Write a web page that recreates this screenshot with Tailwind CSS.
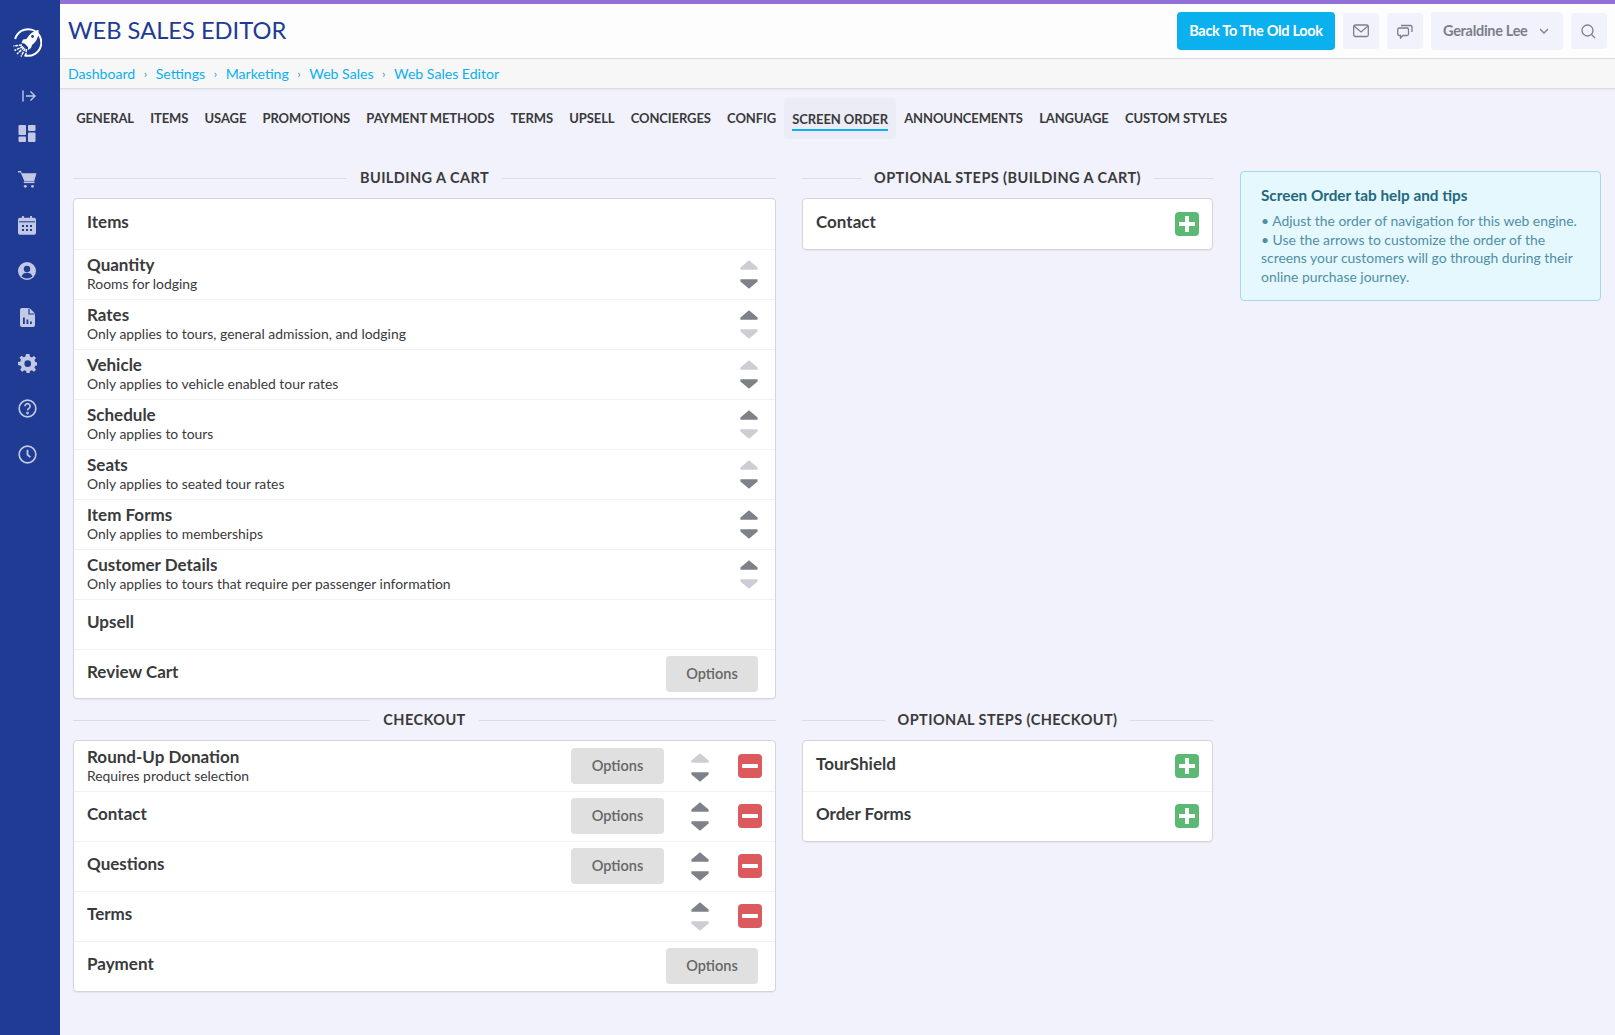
<!DOCTYPE html>
<html><head><meta charset="utf-8"><script src="https://cdn.jsdelivr.net/npm/@tailwindcss/browser@4"></script></head>
<body class="m-0">
<svg width="0" height="0" class="absolute"><defs>
<symbol id="up" viewBox="0 0 18 10"><path d="M9 0.2 L17.6 7.4 V9.8 H0.4 V7.4 Z" fill="currentColor"/></symbol>
<symbol id="down" viewBox="0 0 18 10"><path d="M9 9.8 L17.6 2.6 V0.2 H0.4 V2.6 Z" fill="currentColor"/></symbol>
</defs></svg>
<div class="flex w-[1615px] h-[1035px] overflow-hidden bg-[#f1f2fb] font-['Lato','Liberation_Sans',sans-serif] text-[#3a3a3c]">
  <aside class="w-[60px] shrink-0 bg-[#1f3b94] flex flex-col items-center pr-[6px] text-[#c3c9e4]">
    <svg class="mt-[28px]" width="30" height="30" viewBox="0 0 30 30" fill="none">
      <circle cx="16" cy="14.500" r="13.300" stroke="#fff" stroke-width="2" stroke-dasharray="62.400 21.200" transform="rotate(195 16 14.500)"/>
      <path d="M26.500 2 C22 2.500 17.500 6 14.500 11 L11 11.500 L9.500 15 L12.500 15.500 L16 19 L16 22 L19 20 L20 17 C25 13.500 27 7.500 26.500 2 Z" fill="#fff"/>
      <circle cx="20.500" cy="8.500" r="1.400" fill="#1f3b94"/>
      <path d="M10 17 L1.500 18 M11 18.500 L2.500 22.500 M12 19.500 L5 26 M13 20.500 L9 28.500 M14.500 21 L13.500 29" stroke="#fff" stroke-width="1.500" stroke-dasharray="3 0.800"/>
    </svg>
    <svg class="mt-[31px] ml-[4px]" width="14" height="14" viewBox="0 0 14 14" fill="none" stroke="currentColor" stroke-width="1.400"><path d="M1 1.500v11M4 7h9M8.500 2.500L13 7l-4.500 4.500"/></svg>
    <svg class="mt-[22px]" width="18" height="17" viewBox="0 0 18 17" fill="currentColor"><rect x="0.500" y="0" width="7.500" height="10" rx="1"/><rect x="10" y="0" width="7.500" height="6" rx="1"/><rect x="0.500" y="11.500" width="7.500" height="5.500" rx="1"/><rect x="10" y="7.500" width="7.500" height="9.500" rx="1"/></svg>
    <svg class="mt-[29px]" width="19" height="17" viewBox="0 0 19 17" fill="currentColor"><path d="M0 0h3l.9 2.300H18.500l-2.300 7.700H6.300L2.600 1.500H0z"/><path d="M5.800 10.500h10.700v1.600H5.800z"/><circle cx="7.300" cy="15.300" r="1.400"/><circle cx="14.500" cy="15.300" r="1.400"/></svg>
    <svg class="mt-[28px]" width="18" height="19" viewBox="0 0 18 19" fill="currentColor"><rect x="0" y="1.800" width="18" height="17" rx="2"/><rect x="4" y="0" width="1.800" height="3"/><rect x="12.200" y="0" width="1.800" height="3"/><rect x="1" y="5.300" width="16" height="1" fill="#1f3b94"/><g fill="#1f3b94"><rect x="4" y="9" width="2" height="2"/><rect x="8" y="9" width="2" height="2"/><rect x="12" y="9" width="2" height="2"/><rect x="4" y="13" width="2" height="2"/><rect x="8" y="13" width="2" height="2"/><rect x="12" y="13" width="2" height="2"/></g></svg>
    <svg class="mt-[27px]" width="18" height="18" viewBox="0 0 18 18"><circle cx="9" cy="9" r="9" fill="currentColor"/><circle cx="9" cy="7" r="3.200" fill="#1f3b94"/><path d="M3.500 14.500c1-3 3-3.800 5.500-3.800s4.500.8 5.500 3.800c-3 2.500-8 2.500-11 0z" fill="#1f3b94"/></svg>
    <svg class="mt-[28px]" width="15" height="19" viewBox="0 0 15 19"><path d="M2 0h7.500L15 5.500V17a2 2 0 0 1-2 2H2a2 2 0 0 1-2-2V2a2 2 0 0 1 2-2z" fill="currentColor"/><path d="M9 0.500V6h5.500" fill="none" stroke="#1f3b94" stroke-width="1.200"/><rect x="3" y="9.500" width="1.800" height="6.500" fill="#1f3b94"/><rect x="6.500" y="11.500" width="1.800" height="4.500" fill="#1f3b94"/><rect x="10" y="13.500" width="1.800" height="2.500" fill="#1f3b94"/></svg>
    <svg class="mt-[27px]" width="19" height="19" viewBox="0 0 24 24" fill="currentColor"><path fill-rule="evenodd" d="M14.500 0l.6 3.300 2.300 1 2.800-1.900 2.500 2.500-1.900 2.800 1 2.300 3.300.6v3.600l-3.300.6-1 2.300 1.900 2.800-2.500 2.500-2.800-1.900-2.300 1-.6 3.300h-3.600l-.6-3.300-2.300-1-2.800 1.900-2.500-2.500 1.900-2.800-1-2.300L-.5 13.900v-3.600l3.300-.6 1-2.300-1.900-2.800 2.500-2.500 2.800 1.900 2.300-1L10.100 0zM12.300 8a4.200 4.200 0 1 0 0 8.400 4.200 4.200 0 0 0 0-8.400z"/></svg>
    <svg class="mt-[26px]" width="19" height="19" viewBox="0 0 20 20" fill="none" stroke="currentColor" stroke-width="1.700"><circle cx="10" cy="10" r="8.800"/><path d="M7.300 7.600a2.700 2.700 0 1 1 4.200 2.300c-1 .7-1.500 1.100-1.500 2.300"/><circle cx="10" cy="14.800" r=".6" fill="currentColor"/></svg>
    <svg class="mt-[27px]" width="19" height="19" viewBox="0 0 20 20" fill="none" stroke="currentColor" stroke-width="1.700"><circle cx="10" cy="10" r="8.800"/><path d="M10 5v5.300l3 2.500" stroke-width="1.900"/></svg>
  </aside>
  <main class="flex-1 min-w-0 flex flex-col">
    <div class="h-1 bg-[#9370d8]"></div>
    <header class="h-[54px] bg-[#fdfdfd] border-b border-[#dcdcdc] box-content flex items-center pl-[8px] pr-[8px]">
      <h1 class="text-[23.700px] leading-none text-[#1f3b94] font-normal flex-1">WEB SALES EDITOR</h1>
      <a class="h-[38px] w-[158px] rounded bg-[#0bb0ef] text-white font-bold text-[14.500px] tracking-[-0.3px] flex items-center justify-center">Back To The Old Look</a>
      <div class="ml-2 w-9 h-9 rounded bg-[#f1f2fb] flex items-center justify-center text-[#7c7f8a]"><svg width="16" height="14" viewBox="0 0 16 14" fill="none" stroke="currentColor" stroke-width="1.300"><rect x=".7" y="1" width="14.600" height="11.500" rx="1.500"/><path d="M1 2l7 6 7-6"/></svg></div>
      <div class="ml-2 w-9 h-9 rounded bg-[#f1f2fb] flex items-center justify-center text-[#7c7f8a]"><svg width="16" height="15" viewBox="0 0 16 15" fill="none" stroke="currentColor" stroke-width="1.300"><path d="M2 4h8a1.500 1.500 0 0 1 1.500 1.500V10A1.500 1.500 0 0 1 10 11.500H6L3.500 14v-2.500H2A1.500 1.500 0 0 1 .7 10V5.500A1.500 1.500 0 0 1 2 4z"/><path d="M4 1.500h9.500A1.500 1.500 0 0 1 15 3v5"/></svg></div>
      <div class="ml-2 w-[132px] h-[38px] rounded bg-[#f1f2fb] flex items-center pl-3 text-[#7c7f8a] font-bold text-[14.500px] tracking-[-0.3px]">Geraldine Lee<svg class="ml-[11px]" width="10" height="6" viewBox="0 0 10 6" fill="none" stroke="currentColor" stroke-width="1.300"><path d="M1 1l4 4 4-4"/></svg></div>
      <div class="ml-2 w-9 h-9 rounded bg-[#f1f2fb] flex items-center justify-center text-[#7c7f8a]"><svg class="-ml-[2px]" width="15" height="15" viewBox="0 0 15 15" fill="none" stroke="currentColor" stroke-width="1.300"><circle cx="6.500" cy="6.500" r="5.500"/><path d="M10.500 10.500L14 14"/></svg></div>
    </header>
    <nav class="h-[29px] bg-[#f7f7f7] border-b border-[#dcdcdc] box-content shadow-[0_1px_2px_rgba(0,0,0,0.05)] flex items-center pl-[8px] text-[14.100px] text-[#0bb0ef]">
      <a>Dashboard</a><span class="mx-[8.600px] text-[#2f9ccc] text-[12px]">›</span><a>Settings</a><span class="mx-[8.600px] text-[#2f9ccc] text-[12px]">›</span><a>Marketing</a><span class="mx-[8.600px] text-[#2f9ccc] text-[12px]">›</span><a>Web Sales</a><span class="mx-[8.600px] text-[#2f9ccc] text-[12px]">›</span><a>Web Sales Editor</a>
    </nav>
    <div class="mt-[9px] pl-[8px] h-[41px] flex text-[13px] font-bold tracking-[-0.1px] text-[#3a3a3c]">
      <a class="px-[8.130px] flex items-center">GENERAL</a><a class="px-[8.130px] flex items-center">ITEMS</a><a class="px-[8.130px] flex items-center">USAGE</a><a class="px-[8.130px] flex items-center">PROMOTIONS</a><a class="px-[8.130px] flex items-center">PAYMENT METHODS</a><a class="px-[8.130px] flex items-center">TERMS</a><a class="px-[8.130px] flex items-center">UPSELL</a><a class="px-[8.130px] flex items-center">CONCIERGES</a><a class="px-[8.130px] flex items-center">CONFIG</a>
      <a class="px-[8.130px] flex items-center bg-[#ebecf5] rounded-[4px]"><span class="pt-[2px] border-b-2 border-[#0bb0ef] leading-[20px]">SCREEN ORDER</span></a>
      <a class="px-[8.130px] flex items-center">ANNOUNCEMENTS</a><a class="px-[8.130px] flex items-center">LANGUAGE</a><a class="px-[8.130px] flex items-center">CUSTOM STYLES</a>
    </div>
    <div class="mt-[25px] pl-[13px] flex items-start">
      <div class="w-[703px] shrink-0">
        <div class="flex items-center gap-[13px] h-[28px] text-[14.500px] font-bold tracking-[0.420px] mb-[-8px]"><i class="flex-1 h-px bg-[#dcdde3]"></i><span>BUILDING A CART</span><i class="flex-1 h-px bg-[#dcdde3]"></i></div>
        <section class="mt-[14px] h-[501px] box-border overflow-hidden bg-white border border-[#d3d4de] rounded-[4px] shadow-[0_1px_1px_rgba(0,0,0,0.05)] flex flex-col divide-y divide-[#f1f1f3]">
          <div class="h-[51px] shrink-0 px-[13px] pt-[12px] text-[17px] leading-[22px] font-bold">Items</div>
          <div class="h-[50px] shrink-0 flex items-center justify-between pl-[13px] pr-[17px]"><div class="-mt-[2px]"><div class="text-[17px] leading-[20px] font-bold">Quantity</div><div class="text-[13.900px] leading-[18px]">Rooms for lodging</div></div><div class="flex flex-col gap-[9px] text-[#ccced3]"><svg width="18" height="10"><use href="#up"/></svg><svg class="text-[#7d8288]" width="18" height="10"><use href="#down"/></svg></div></div>
          <div class="h-[50px] shrink-0 flex items-center justify-between pl-[13px] pr-[17px]"><div class="-mt-[2px]"><div class="text-[17px] leading-[20px] font-bold">Rates</div><div class="text-[13.900px] leading-[18px]">Only applies to tours, general admission, and lodging</div></div><div class="flex flex-col gap-[9px] text-[#7d8288]"><svg width="18" height="10"><use href="#up"/></svg><svg class="text-[#ccced3]" width="18" height="10"><use href="#down"/></svg></div></div>
          <div class="h-[50px] shrink-0 flex items-center justify-between pl-[13px] pr-[17px]"><div class="-mt-[2px]"><div class="text-[17px] leading-[20px] font-bold">Vehicle</div><div class="text-[13.900px] leading-[18px]">Only applies to vehicle enabled tour rates</div></div><div class="flex flex-col gap-[9px] text-[#ccced3]"><svg width="18" height="10"><use href="#up"/></svg><svg class="text-[#7d8288]" width="18" height="10"><use href="#down"/></svg></div></div>
          <div class="h-[50px] shrink-0 flex items-center justify-between pl-[13px] pr-[17px]"><div class="-mt-[2px]"><div class="text-[17px] leading-[20px] font-bold">Schedule</div><div class="text-[13.900px] leading-[18px]">Only applies to tours</div></div><div class="flex flex-col gap-[9px] text-[#7d8288]"><svg width="18" height="10"><use href="#up"/></svg><svg class="text-[#ccced3]" width="18" height="10"><use href="#down"/></svg></div></div>
          <div class="h-[50px] shrink-0 flex items-center justify-between pl-[13px] pr-[17px]"><div class="-mt-[2px]"><div class="text-[17px] leading-[20px] font-bold">Seats</div><div class="text-[13.900px] leading-[18px]">Only applies to seated tour rates</div></div><div class="flex flex-col gap-[9px] text-[#ccced3]"><svg width="18" height="10"><use href="#up"/></svg><svg class="text-[#7d8288]" width="18" height="10"><use href="#down"/></svg></div></div>
          <div class="h-[50px] shrink-0 flex items-center justify-between pl-[13px] pr-[17px]"><div class="-mt-[2px]"><div class="text-[17px] leading-[20px] font-bold">Item Forms</div><div class="text-[13.900px] leading-[18px]">Only applies to memberships</div></div><div class="flex flex-col gap-[9px] text-[#7d8288]"><svg width="18" height="10"><use href="#up"/></svg><svg width="18" height="10"><use href="#down"/></svg></div></div>
          <div class="h-[50px] shrink-0 flex items-center justify-between pl-[13px] pr-[17px]"><div class="-mt-[2px]"><div class="text-[17px] leading-[20px] font-bold">Customer Details</div><div class="text-[13.900px] leading-[18px]">Only applies to tours that require per passenger information</div></div><div class="flex flex-col gap-[9px] text-[#7d8288]"><svg width="18" height="10"><use href="#up"/></svg><svg class="text-[#ccced3]" width="18" height="10"><use href="#down"/></svg></div></div>
          <div class="h-[50px] shrink-0 px-[13px] pt-[11px] text-[17px] leading-[22px] font-bold">Upsell</div>
          <div class="h-[48px] shrink-0 flex items-center justify-between pl-[13px] pr-[17px]"><div class="text-[17px] leading-[22px] font-bold -mt-[4px]">Review Cart</div><button class="w-[92px] h-9 rounded bg-[#e0e0e0] text-[14.500px] font-semibold text-[#666]">Options</button></div>
        </section>
        <div class="mt-[7px] flex items-center gap-[13px] h-[28px] text-[14.500px] font-bold tracking-[0.420px]"><i class="flex-1 h-px bg-[#dcdde3]"></i><span>CHECKOUT</span><i class="flex-1 h-px bg-[#dcdde3]"></i></div>
        <section class="mt-[6px] h-[252px] box-border overflow-hidden bg-white border border-[#d3d4de] rounded-[4px] shadow-[0_1px_1px_rgba(0,0,0,0.05)] flex flex-col divide-y divide-[#f1f1f3]">
          <div class="h-[51px] shrink-0 flex items-center px-[13px]"><div class="flex-1 -mt-[1px]"><div class="text-[17px] leading-[20px] font-bold">Round-Up Donation</div><div class="text-[13.900px] leading-[18px]">Requires product selection</div></div><button class="w-[93px] h-9 rounded bg-[#e0e0e0] text-[14.500px] font-semibold text-[#666]">Options</button><div class="ml-[27px] mt-[2px] flex flex-col gap-[9px] text-[#ccced3]"><svg width="18" height="10"><use href="#up"/></svg><svg class="text-[#7d8288]" width="18" height="10"><use href="#down"/></svg></div><div class="ml-[29px] w-6 h-6 rounded-[4px] bg-[#dc5a5e] flex items-center justify-center"><i class="w-4 h-1 bg-white rounded-[1px]"></i></div></div>
          <div class="h-[50px] shrink-0 flex items-center px-[13px] pb-[2px]"><div class="flex-1 text-[17px] leading-[22px] font-bold -mt-[3px]">Contact</div><button class="w-[93px] h-9 rounded bg-[#e0e0e0] text-[14.500px] font-semibold text-[#666]">Options</button><div class="ml-[27px] mt-[2px] flex flex-col gap-[9px] text-[#7d8288]"><svg width="18" height="10"><use href="#up"/></svg><svg width="18" height="10"><use href="#down"/></svg></div><div class="ml-[29px] w-6 h-6 rounded-[4px] bg-[#dc5a5e] flex items-center justify-center"><i class="w-4 h-1 bg-white rounded-[1px]"></i></div></div>
          <div class="h-[50px] shrink-0 flex items-center px-[13px] pb-[2px]"><div class="flex-1 text-[17px] leading-[22px] font-bold -mt-[3px]">Questions</div><button class="w-[93px] h-9 rounded bg-[#e0e0e0] text-[14.500px] font-semibold text-[#666]">Options</button><div class="ml-[27px] mt-[2px] flex flex-col gap-[9px] text-[#7d8288]"><svg width="18" height="10"><use href="#up"/></svg><svg width="18" height="10"><use href="#down"/></svg></div><div class="ml-[29px] w-6 h-6 rounded-[4px] bg-[#dc5a5e] flex items-center justify-center"><i class="w-4 h-1 bg-white rounded-[1px]"></i></div></div>
          <div class="h-[50px] shrink-0 flex items-center px-[13px] pb-[2px]"><div class="flex-1 text-[17px] leading-[22px] font-bold -mt-[3px]">Terms</div><div class="ml-[27px] mt-[2px] flex flex-col gap-[9px] text-[#7d8288]"><svg width="18" height="10"><use href="#up"/></svg><svg class="text-[#ccced3]" width="18" height="10"><use href="#down"/></svg></div><div class="ml-[29px] w-6 h-6 rounded-[4px] bg-[#dc5a5e] flex items-center justify-center"><i class="w-4 h-1 bg-white rounded-[1px]"></i></div></div>
          <div class="h-[49px] shrink-0 flex items-center justify-between pl-[13px] pr-[17px] pb-[1px]"><div class="text-[17px] leading-[22px] font-bold -mt-[5px]">Payment</div><button class="w-[92px] h-9 rounded bg-[#e0e0e0] text-[14.500px] font-semibold text-[#666]">Options</button></div>
        </section>
      </div>
      <div class="ml-[26px] w-[411px] shrink-0">
        <div class="flex items-center gap-[13px] h-[28px] text-[14.500px] font-bold tracking-[0.420px] mb-[-8px]"><i class="flex-1 h-px bg-[#dcdde3]"></i><span>OPTIONAL STEPS (BUILDING A CART)</span><i class="flex-1 h-px bg-[#dcdde3]"></i></div>
        <section class="mt-[14px] h-[52px] box-border bg-white border border-[#d3d4de] rounded-[4px] shadow-[0_1px_1px_rgba(0,0,0,0.05)] flex items-center justify-between pl-[13px] pr-[13px]"><div class="text-[17px] leading-[22px] font-bold -mt-[5px]">Contact</div><div class="w-6 h-6 rounded-[4px] bg-[#5cb974] relative flex items-center justify-center"><i class="absolute w-4 h-1 bg-white"></i><i class="absolute w-1 h-4 bg-white"></i></div></section>
        <div class="mt-[456px] flex items-center gap-[13px] h-[28px] text-[14.500px] font-bold tracking-[0.420px]"><i class="flex-1 h-px bg-[#dcdde3]"></i><span>OPTIONAL STEPS (CHECKOUT)</span><i class="flex-1 h-px bg-[#dcdde3]"></i></div>
        <section class="mt-[6px] h-[102px] box-border overflow-hidden bg-white border border-[#d3d4de] rounded-[4px] shadow-[0_1px_1px_rgba(0,0,0,0.05)] flex flex-col divide-y divide-[#f1f1f3]">
          <div class="h-[51px] shrink-0 flex items-center justify-between pl-[13px] pr-[13px]"><div class="text-[17px] leading-[22px] font-bold -mt-[4px]">TourShield</div><div class="w-6 h-6 rounded-[4px] bg-[#5cb974] relative flex items-center justify-center"><i class="absolute w-4 h-1 bg-white"></i><i class="absolute w-1 h-4 bg-white"></i></div></div>
          <div class="h-[49px] shrink-0 flex items-center justify-between pl-[13px] pr-[13px] pb-[1px]"><div class="text-[17px] leading-[22px] font-bold -mt-[5px]">Order Forms</div><div class="w-6 h-6 rounded-[4px] bg-[#5cb974] relative flex items-center justify-center"><i class="absolute w-4 h-1 bg-white"></i><i class="absolute w-1 h-4 bg-white"></i></div></div>
        </section>
      </div>
      <aside class="ml-[27px] mt-[7px] w-[361px] h-[130px] box-border bg-[#e5f8fe] border border-[#a3d8e5] rounded-[4px] pl-[20px] pr-2 pt-[13px] text-[#4f8fa5]">
        <div class="text-[15.300px] leading-[20px] font-bold text-[#24687f] mb-[7px]">Screen Order tab help and tips</div>
        <div class="text-[13.900px] leading-[18.500px]">• Adjust the order of navigation for this web engine.<br>• Use the arrows to customize the order of the screens your customers will go through during their online purchase journey.</div>
      </aside>
    </div>
  </main>
</div>
</body></html>
